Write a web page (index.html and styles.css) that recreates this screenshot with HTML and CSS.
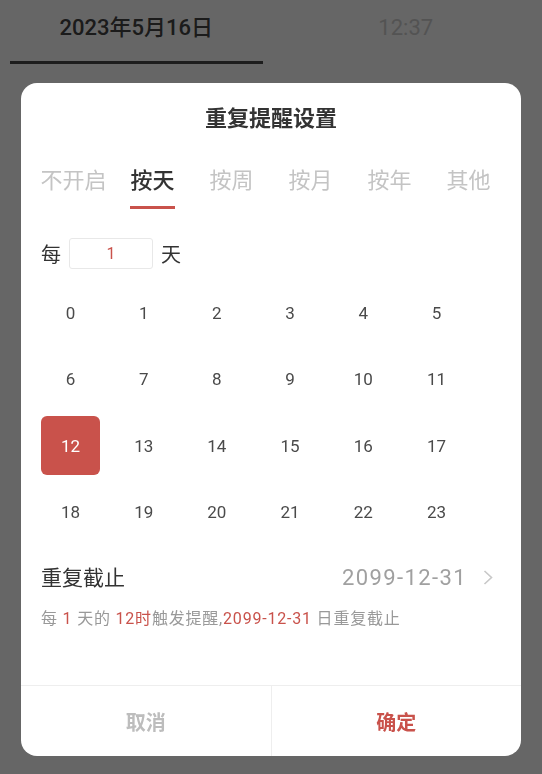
FILE: index.html
```html
<!DOCTYPE html>
<html lang="zh-CN">
<head>
    <meta charset="UTF-8">
    <meta name="viewport" content="width=device-width, initial-scale=1.0">
    <title>重复提醒设置</title>
    <link rel="stylesheet" href="styles.css">
</head>
<body>
    <div class="picker-tabs">
        <div class="picker-tab active">2023年5月16日</div>
        <div class="picker-tab">12:37</div>
    </div>

    <div class="mask">
        <div class="dialog">
            <div class="dialog-title">重复提醒设置</div>

            <div class="mode-tabs">
                <div class="mode"><span>不开启</span></div>
                <div class="mode active"><span>按天</span></div>
                <div class="mode"><span>按周</span></div>
                <div class="mode"><span>按月</span></div>
                <div class="mode"><span>按年</span></div>
                <div class="mode"><span>其他</span></div>
            </div>

            <div class="interval">
                <span>每</span>
                <div class="interval-input">1</div>
                <span>天</span>
            </div>

            <div class="hours">
                <div class="hour">0</div>
                <div class="hour">1</div>
                <div class="hour">2</div>
                <div class="hour">3</div>
                <div class="hour">4</div>
                <div class="hour">5</div>
                <div class="hour">6</div>
                <div class="hour">7</div>
                <div class="hour">8</div>
                <div class="hour">9</div>
                <div class="hour">10</div>
                <div class="hour">11</div>
                <div class="hour selected">12</div>
                <div class="hour">13</div>
                <div class="hour">14</div>
                <div class="hour">15</div>
                <div class="hour">16</div>
                <div class="hour">17</div>
                <div class="hour">18</div>
                <div class="hour">19</div>
                <div class="hour">20</div>
                <div class="hour">21</div>
                <div class="hour">22</div>
                <div class="hour">23</div>
            </div>

            <div class="end-row">
                <span class="end-label">重复截止</span>
                <span class="end-value">2099-12-31
                    <svg class="chevron" width="10" height="15" viewBox="0 0 10 15">
                        <path d="M1.5 1 L8.5 7.5 L1.5 14" fill="none" stroke="#c8c8c8" stroke-width="1.6"/>
                    </svg>
                </span>
            </div>

            <div class="summary">每 <em>1</em> 天的 <em>12时</em>触发提醒,<em>2099-12-31</em> 日重复截止</div>

            <div class="dialog-footer">
                <div class="btn cancel">取消</div>
                <div class="btn confirm">确定</div>
            </div>
        </div>
    </div>
</body>
</html>
```

FILE: styles.css
```css
body {
    margin: 0;
    padding: 0;
    background: #fff;
    font-family: Roboto, 'Noto Sans CJK SC', sans-serif;
    overflow: hidden;
}

.picker-tabs {
    display: flex;
    gap: 17px;
    padding: 0 10px;
}

.picker-tab {
    width: 253px;
    height: 61px;
    line-height: 55px;
    text-align: center;
    font-size: 22px;
    color: #d0d0d0;
    border-bottom: 3px solid transparent;
}

.picker-tab.active {
    color: #444;
    font-weight: 500;
    border-bottom-color: #4a4a4a;
}

.mask {
    position: fixed;
    top: 0;
    left: 0;
    right: 0;
    bottom: 0;
    background: rgba(0, 0, 0, 0.6);
    display: flex;
    justify-content: center;
    align-items: flex-start;
    padding-top: 83px;
}

.dialog {
    width: 500px;
    height: 673px;
    background: #fff;
    border-radius: 16px;
    display: flex;
    flex-direction: column;
    overflow: hidden;
}

.dialog-title {
    margin-top: 21px;
    line-height: 30px;
    text-align: center;
    font-size: 22px;
    font-weight: bold;
    color: #333;
}

.mode-tabs {
    display: flex;
    padding: 0 13px;
    margin-top: 32px;
}

.mode {
    flex: 1;
    text-align: center;
    font-size: 22px;
    line-height: 30px;
    color: #c4c4c4;
}

.mode span {
    display: inline-block;
    padding-bottom: 10px;
    border-bottom: 3px solid transparent;
}

.mode.active {
    color: #333;
    font-weight: 500;
}

.mode.active span {
    border-bottom-color: #c9524b;
}

.interval {
    display: flex;
    align-items: center;
    gap: 8px;
    padding: 0 20px;
    margin-top: 29px;
    font-size: 20px;
    color: #333;
}

.interval-input {
    width: 82px;
    height: 29px;
    border: 1px solid #e8e8e8;
    border-radius: 3px;
    text-align: center;
    line-height: 29px;
    font-size: 16px;
    color: #c9524b;
}

.hours {
    display: grid;
    grid-template-columns: repeat(6, 59px);
    grid-auto-rows: 59px;
    column-gap: 14.2px;
    row-gap: 7.3px;
    padding: 0 20px;
    margin-top: 14.5px;
}

.hour {
    display: flex;
    align-items: center;
    justify-content: center;
    font-size: 17px;
    color: #4a4a4a;
    border-radius: 6px;
}

.hour.selected {
    background: #c9524b;
    color: #fff;
}

.end-row {
    display: flex;
    justify-content: space-between;
    align-items: center;
    padding: 0 28px 0 20px;
    margin-top: 21.5px;
    line-height: 30px;
}

.end-label {
    font-size: 21px;
    color: #333;
}

.end-value {
    display: flex;
    align-items: center;
    gap: 16px;
    font-size: 22px;
    letter-spacing: 1.4px;
    color: #a0a0a0;
}

.summary {
    padding: 0 20px;
    margin-top: 16px;
    line-height: 20px;
    font-size: 16px;
    letter-spacing: 0.8px;
    color: #999;
}

.summary em {
    font-style: normal;
    color: #c9524b;
}

.dialog-footer {
    margin-top: auto;
    height: 70px;
    display: flex;
    border-top: 1px solid #eee;
}

.btn {
    flex: 1;
    display: flex;
    align-items: center;
    justify-content: center;
    font-size: 20px;
    font-weight: bold;
}

.btn.cancel {
    color: #bdbdbd;
    border-right: 1px solid #eee;
}

.btn.confirm {
    color: #c9524b;
}
```
